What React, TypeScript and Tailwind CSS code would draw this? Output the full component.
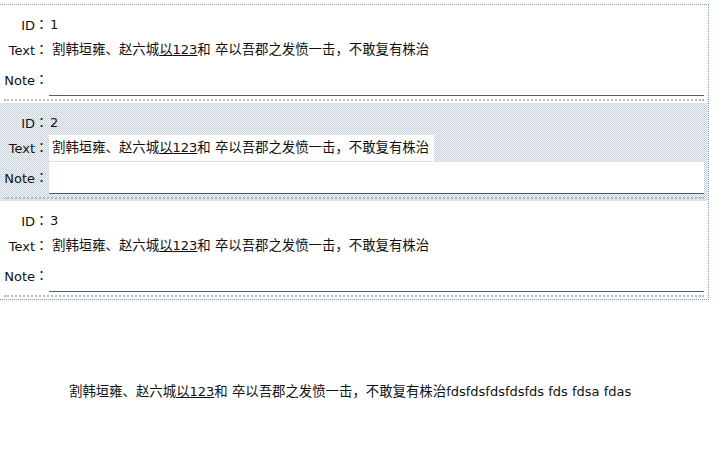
import React from 'react'

const items = [
  { id: 1, shaded: false },
  { id: 2, shaded: true },
  { id: 3, shaded: false },
]

// chinese glyphs run a touch wider than the latin text
function Sentence() {
  return (
    <>
      <span className="text-[13.4px]">割韩垣雍、赵六城</span>
      <u>
        <span className="text-[13.4px]">以</span>123
      </u>
      <span className="text-[13.4px]">和</span> <span className="text-[13.4px]">卒以吾郡之发愤一击，不敢复有株治</span>
    </>
  )
}

function Label({ name }: { name: string }) {
  return (
    <div className="w-[48px] shrink-0 text-right">
      {name}
      <span className="relative -top-[1px] font-['Noto_Sans_CJK_TC',sans-serif]">：</span>
    </div>
  )
}

function Item({ id, shaded }: { id: number; shaded: boolean }) {
  return (
    <div
      className={
        shaded
          ? 'flex flex-col pt-[8px] pb-[2px] bg-[repeating-conic-gradient(#c6cfdc_0_25%,#f4f6f9_0_50%)] bg-[length:2px_2px]'
          : 'flex flex-col pt-[8px] pb-[2px] bg-white'
      }
    >
      <div className="flex items-center h-[24px]">
        <Label name="ID" />
        <div className="pl-[2px]">{id}</div>
      </div>
      <div className="flex items-center h-[26px]">
        <Label name="Text" />
        <div className={shaded ? 'ml-[1px] h-full flex items-center pl-[3px] pr-[5px] bg-white' : 'ml-[1px] h-full flex items-center pl-[3px] pr-[5px]'}>
          <div>
            <Sentence />
          </div>
        </div>
      </div>
      <div className="flex items-center h-[32px] mt-[1px]">
        <Label name="Note" />
        <input
          className="ml-[1px] mr-[4px] flex-1 h-full bg-white border-b border-[#4f5f6f] outline-none"
          defaultValue=""
        />
      </div>
      <div className="mx-[4px] mt-[3px] border-t-2 border-dotted border-[#b9b9b9]" />
    </div>
  )
}

export default function App() {
  return (
    <div className="w-[724px] h-[450px] bg-white text-[13px] text-[#111] font-['DejaVu_Sans','Noto_Sans_CJK_SC',sans-serif]">
      <div className="w-[709px] mt-[4px] border-t border-r border-b border-dotted border-[#7f9db9]">
        {items.map((it) => (
          <Item key={it.id} id={it.id} shaded={it.shaded} />
        ))}
      </div>
      <div className="mt-[82px] pl-[69px] h-[20px] flex items-center whitespace-nowrap">
        <div>
          <Sentence />
          fdsfdsfdsfdsfds fds fdsa fdas
        </div>
      </div>
    </div>
  )
}
